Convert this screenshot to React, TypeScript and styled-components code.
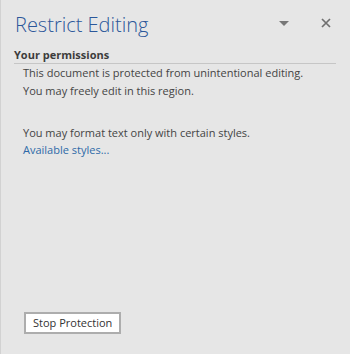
import React from 'react';
import styled, { createGlobalStyle } from 'styled-components';


const GlobalStyle = createGlobalStyle`
  html, body {
    margin: 0;
    padding: 0;
    background: #e6e6e6;
  }
`;

const Pane = styled.div`
  display: flex;
  flex-direction: column;
  box-sizing: border-box;
  width: 350px;
  height: 354px;
  padding: 11px 14px 20px 13px;
  border-left: 1px solid #d2d2d2;
  background: #e6e6e6;
  font-family: "Open Sans", "Noto Sans", sans-serif;
  color: #444444;
  overflow: hidden;
`;

const Header = styled.div`
  display: flex;
  flex-direction: row;
  align-items: flex-start;
  height: 28px;
`;

const Title = styled.div`
  flex: 1 0;
  padding-left: 1px;
  font-size: 20px;
  line-height: 28px;
  font-weight: 300;
  color: #2b579a;
`;

const Actions = styled.div`
  display: flex;
  flex-direction: row;
  align-items: center;
  gap: 32px;
  height: 20px;
  margin: 2px 5px 0 0;
`;

const IconButton = styled.div`
  display: flex;
  align-items: center;
  justify-content: center;
  height: 20px;
`;

const Section = styled.div`
  display: flex;
  flex-direction: column;
  flex: 1 0;
  margin-top: 8px;
`;

const SectionTitle = styled.div`
  font-size: 11px;
  line-height: 16px;
  font-weight: 700;
  color: #3c3c3c;
  border-bottom: 1px solid #c6c6c6;
`;

const Body = styled.div`
  display: flex;
  flex-direction: column;
  padding-left: 9px;
`;

const Line = styled.div<{ $space?: number }>`
  font-size: 11px;
  line-height: 18px;
  margin-top: ${props => props.$space || 0}px;
`;

const Link = styled.a`
  align-self: flex-start;
  font-size: 11px;
  line-height: 16px;
  color: #2e6aa8;
  text-decoration: none;
  cursor: pointer;
`;

const Footer = styled.div`
  display: flex;
  padding-left: 10px;
`;

const Button = styled.button`
  box-sizing: border-box;
  height: 22px;
  padding: 0 7px;
  border: 2px solid #adadad;
  background: #ffffff;
  font-family: inherit;
  font-size: 11px;
  line-height: 16px;
  color: #333333;
`;


function App() {
  return (
    <>
      <GlobalStyle />
      <Pane>
        <Header>
          <Title>Restrict Editing</Title>
          <Actions>
            <IconButton>
              <svg width="10" height="5" viewBox="0 0 10 5">
                <path d="M0 0 H10 L5 5 Z" fill="#777777" />
              </svg>
            </IconButton>
            <IconButton>
              <svg width="10" height="10" viewBox="0 0 10 10">
                <path d="M1 1 L9 9 M9 1 L1 9" stroke="#707070" strokeWidth="1.7" />
              </svg>
            </IconButton>
          </Actions>
        </Header>
        <Section>
          <SectionTitle>Your permissions</SectionTitle>
          <Body>
            <Line>This document is protected from unintentional editing.</Line>
            <Line>You may freely edit in this region.</Line>
            <Line $space={24}>You may format text only with certain styles.</Line>
            <Link>Available styles...</Link>
          </Body>
        </Section>
        <Footer>
          <Button>Stop Protection</Button>
        </Footer>
      </Pane>
    </>
  );
}

export default App;
